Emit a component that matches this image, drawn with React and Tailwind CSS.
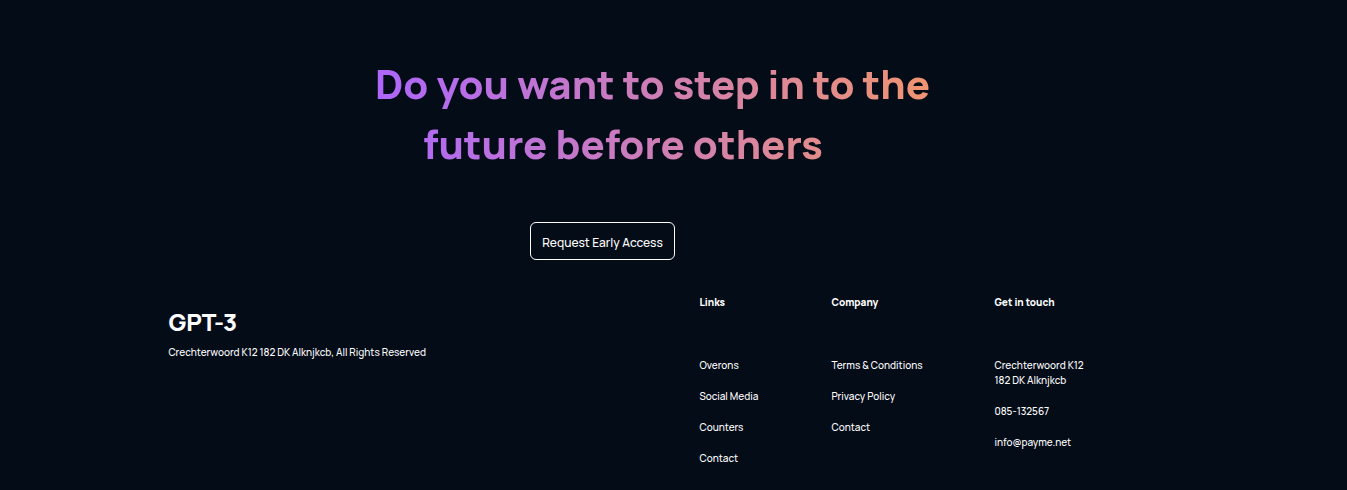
const columns = [
  { title: "Links", width: "w-[132px]", items: ["Overons", "Social Media", "Counters", "Contact"] },
  { title: "Company", width: "w-[163px]", items: ["Terms & Conditions", "Privacy Policy", "Contact"] },
];

function Heading({ children }) {
  return <h3 className="mb-12 font-extrabold">{children}</h3>;
}

export default function App() {
  return (
    <footer className="min-h-screen bg-[#040c18] font-['Manrope','Inter',sans-serif] text-[10px] leading-[15px] font-medium text-white">
      <div className="flex flex-col pt-[54px]">
        <h1 className="mr-[42px] w-fit self-center bg-[linear-gradient(90deg,#ae67fa_2%,#f49867_107%)] bg-clip-text text-[40px] leading-[60px] font-extrabold text-transparent">
          Do you want to step in to the
          <span className="block pl-12">future before others</span>
        </h1>
        <button className="mt-12 mr-[142px] h-[38px] w-[145px] self-center rounded-md border border-white pt-0.5 text-[12px]">
          Request Early Access
        </button>
      </div>
      <div className="mt-[35px] flex px-[12.5%]">
        <div className="flex-1 pt-2.5">
          <h2 className="text-[24px] leading-[34px] font-extrabold">GPT-3</h2>
          <p className="mt-1.5">Crechterwoord K12 182 DK Alknjkcb, All Rights Reserved</p>
        </div>
        <div className="mr-[95px] flex">
          {columns.map((column) => (
            <nav key={column.title} className={column.width} aria-label={column.title}>
              <Heading>{column.title}</Heading>
              <ul className="flex flex-col gap-4">
                {column.items.map((item) => (
                  <li key={item}><a href="#">{item}</a></li>
                ))}
              </ul>
            </nav>
          ))}
          <address className="flex flex-col not-italic">
            <Heading>Get in touch</Heading>
            <p className="mb-4">Crechterwoord K12<br />182 DK Alknjkcb</p>
            <a className="mb-4" href="tel:085132567">085-132567</a>
            <a href="mailto:info@payme.net">info@payme.net</a>
          </address>
        </div>
      </div>
    </footer>
  );
}
